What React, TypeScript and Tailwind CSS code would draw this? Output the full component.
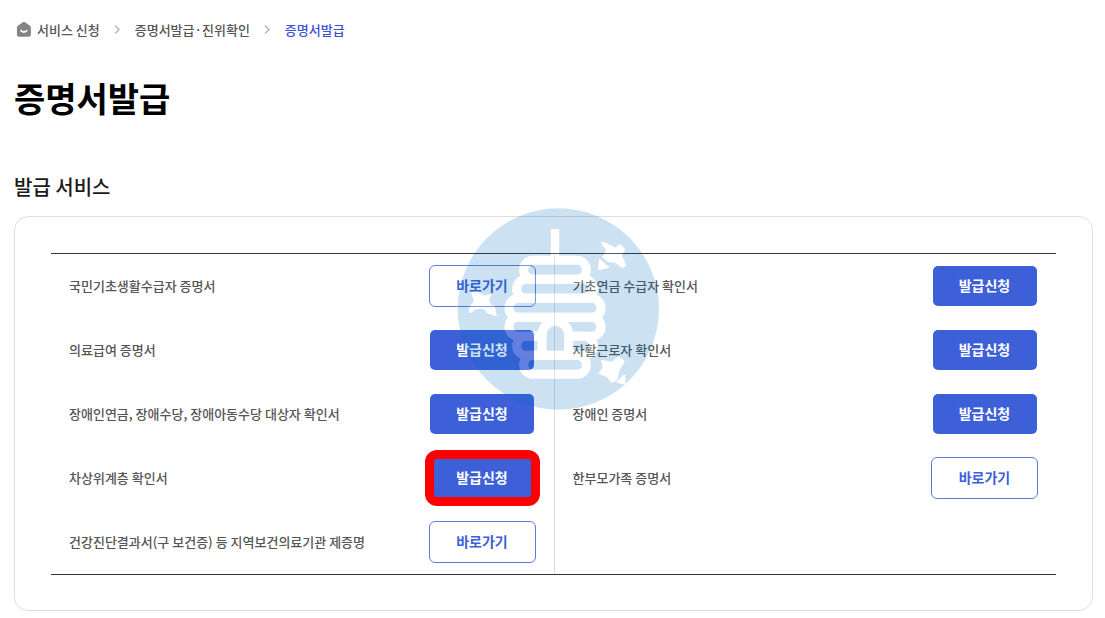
import React from "react";

type Service = { name: string; kind: "apply" | "link"; highlighted?: boolean };

const leftServices: Service[] = [
  { name: "국민기초생활수급자 증명서", kind: "link" },
  { name: "의료급여 증명서", kind: "apply" },
  { name: "장애인연금, 장애수당, 장애아동수당 대상자 확인서", kind: "apply" },
  { name: "차상위계층 확인서", kind: "apply", highlighted: true },
  { name: "건강진단결과서(구 보건증) 등 지역보건의료기관 제증명", kind: "link" },
];

const rightServices: Service[] = [
  { name: "기초연금 수급자 확인서", kind: "apply" },
  { name: "자활근로자 확인서", kind: "apply" },
  { name: "장애인 증명서", kind: "apply" },
  { name: "한부모가족 증명서", kind: "link" },
];

function Chevron() {
  return (
    <svg className="h-3 w-3 shrink-0" viewBox="0 0 12 12" fill="none" stroke="#b4b4b4" strokeWidth="1.4" aria-hidden="true">
      <path d="M4 1.5l4 4-4 4" />
    </svg>
  );
}

function HomeIcon() {
  return (
    <svg className="h-4 w-4 shrink-0" viewBox="0 0 16 16" aria-hidden="true">
      <path d="M6.8.3a2 2 0 0 1 2.2 0l4.6 3.2c.8.6 1.3 1.4 1.3 2.3v6.4a2.5 2.5 0 0 1-2.5 2.5H3.400A2.5 2.5 0 0 1 .9 12.2V5.800c0-.9.5-1.700 1.300-2.300z" fill="#858585" />
      <path d="M5 8.600c1.300 1.900 4.500 1.900 5.800 0" fill="none" stroke="#fff" strokeWidth="1.7" strokeLinecap="round" />
    </svg>
  );
}

function ServiceRow({ service }: { service: Service }) {
  return (
    <li className="flex h-16 items-center justify-between gap-3 px-[18px]">
      <span className="text-[13px] leading-5 font-medium text-[#555]">{service.name}</span>
      <div className="relative flex w-[107px] shrink-0 justify-center">
        {service.kind === "apply" ? (
          <button type="button" className="h-10 w-[104px] rounded-[5px] bg-[#3d60d8] pb-0.5 text-sm font-bold text-white">
            발급신청
          </button>
        ) : (
          <button type="button" className="h-[42px] w-full rounded-md border border-[#5c7be0] bg-white pb-0.5 text-sm font-bold text-[#3d60d8]">
            바로가기
          </button>
        )}
        {service.highlighted && (
          <span className="pointer-events-none absolute -inset-x-1 -inset-y-2 rounded-[12px] border-9 border-[#ff0000]" />
        )}
      </div>
    </li>
  );
}

const hiveTiers = [
  { x: 221, y: 181, width: 188 },
  { x: 200, y: 238, width: 230 },
  { x: 177, y: 295, width: 276 },
  { x: 177, y: 352, width: 276 },
  { x: 200, y: 409, width: 230 },
  { x: 221, y: 466, width: 188 },
];

const beePaths = [
  "M456 127l24 9 15 10 14-12 14 14-10 18 14 30-8 6-24-16-20-2-16-12 12-22-14-18z",
  "M449 179l26 23-29 6z",
  "M455 482l30 6 20-17 17 13-16 28-6 28-14 6-16-18-22-8 12-18z",
  "M502 547l21-22 2 26z",
  "M66 278l16-2 20 14 20-6-8 18 16 24-16 8-18-10-20 2-16 12-2-14 16-20z",
  "M112 338l20-20 6 28z",
];

function HiveDrawing({ line, hole }: { line: string; hole: string }) {
  return (
    <g fill="none" stroke={line} strokeWidth="27">
      <path d="M315 87v94" strokeWidth="25" />
      {hiveTiers.map((tier) => (
        <rect key={tier.y} x={tier.x} y={tier.y} width={tier.width} height="57" rx="28" />
      ))}
      <path d="M276 466v-62a40 40 0 0 1 80 0v62z" fill={hole} />
      {beePaths.map((d) => (
        <path key={d} d={d} fill={line} strokeWidth="4" strokeLinejoin="round" />
      ))}
    </g>
  );
}

function Watermark() {
  return (
    <svg className="pointer-events-none absolute top-[200px] left-1/2 h-[220px] w-[220px] -translate-x-[103px]" viewBox="0 0 660 660" aria-hidden="true">
      <mask id="around-hive">
        <rect width="660" height="660" fill="#fff" />
        <HiveDrawing line="#000" hole="#fff" />
      </mask>
      <mask id="inside-hive">
        <rect width="660" height="660" fill="#000" />
        <HiveDrawing line="#fff" hole="#000" />
      </mask>
      <circle cx="325" cy="327" r="302" fill="#0070c0" fillOpacity=".2" mask="url(#around-hive)" />
      <circle cx="325" cy="327" r="302" fill="#fff" fillOpacity=".2" mask="url(#inside-hive)" />
    </svg>
  );
}

export default function App() {
  return (
    <main className="relative bg-white px-[14px] pt-5 pb-[7px] font-['Noto_Sans_CJK_KR','Noto_Sans',sans-serif]">
      <nav aria-label="breadcrumb" className="flex h-5 items-center pl-0.5 text-[13px] leading-5 font-medium text-[#555]">
        <a href="#service" className="flex items-center gap-[5px]">
          <HomeIcon />
          서비스 신청
        </a>
        <span className="flex w-[35px] justify-center"><Chevron /></span>
        <a href="#certificate">증명서발급·진위확인</a>
        <span className="flex w-[35px] justify-center"><Chevron /></span>
        <a href="#issue" aria-current="page" className="text-[#3d50d8]">증명서발급</a>
      </nav>
      <h1 className="mt-8 text-[34px] leading-[52px] font-bold text-black">증명서발급</h1>
      <h2 className="mt-[47px] text-xl leading-8 font-medium text-[#1a1a1a]">발급 서비스</h2>
      <section className="mt-[13px] mr-[-2px] rounded-[14px] border border-[#dedede] px-9 pt-9 pb-[35px]">
        <div className="grid grid-cols-2 border-y border-[#333]">
          <ul>
            {leftServices.map((s) => <ServiceRow key={s.name} service={s} />)}
          </ul>
          <ul className="border-l border-[#dedede]">
            {rightServices.map((s) => <ServiceRow key={s.name} service={s} />)}
          </ul>
        </div>
      </section>
      <Watermark />
    </main>
  );
}
